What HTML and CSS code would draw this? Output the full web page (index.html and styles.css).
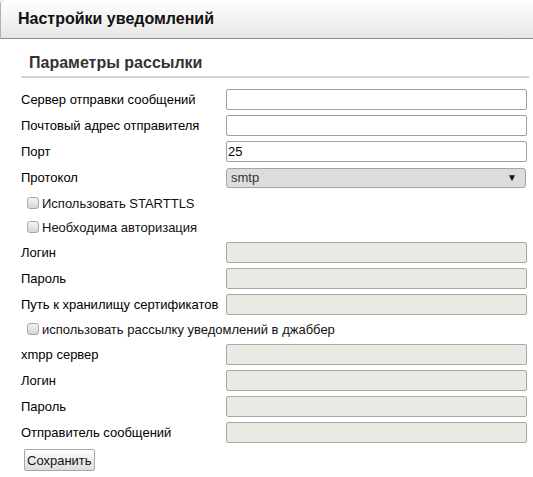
FILE: index.html
```html
<!DOCTYPE html>
<html lang="ru">
<head>
<meta charset="utf-8">
<title>Настройки уведомлений</title>
<link rel="stylesheet" href="styles.css">
</head>
<body>
<div class="header"><h1 class="header-title">Настройки уведомлений</h1></div>
<div class="section">
  <h2 class="section-title">Параметры рассылки</h2>
  <form class="form">
    <div class="row"><label class="lbl">Сервер отправки сообщений</label><input class="field" type="text"></div>
    <div class="row"><label class="lbl">Почтовый адрес отправителя</label><input class="field" type="text"></div>
    <div class="row"><label class="lbl">Порт</label><input class="field" type="text" value="25"></div>
    <div class="row row-select"><label class="lbl">Протокол</label><div class="select"><span>smtp</span><span class="arrow">▼</span></div></div>
    <div class="row row-cb"><label class="cb"><input type="checkbox" class="box">Использовать STARTTLS</label></div>
    <div class="row row-cb"><label class="cb"><input type="checkbox" class="box">Необходима авторизация</label></div>
    <div class="row"><label class="lbl">Логин</label><input class="field" type="text" disabled></div>
    <div class="row"><label class="lbl">Пароль</label><input class="field" type="password" disabled></div>
    <div class="row"><label class="lbl">Путь к хранилищу сертификатов</label><input class="field" type="text" disabled></div>
    <div class="row row-cb"><label class="cb"><input type="checkbox" class="box">использовать рассылку уведомлений в джаббер</label></div>
    <div class="row"><label class="lbl">xmpp сервер</label><input class="field" type="text" disabled></div>
    <div class="row"><label class="lbl">Логин</label><input class="field" type="text" disabled></div>
    <div class="row"><label class="lbl">Пароль</label><input class="field" type="password" disabled></div>
    <div class="row"><label class="lbl">Отправитель сообщений</label><input class="field" type="text" disabled></div>
    <div class="actions"><button type="button" class="btn">Сохранить</button></div>
  </form>
</div>
</body>
</html>
```
FILE: styles.css
```css
html, body {
  margin: 0;
  padding: 0;
  background: #fff;
  font-family: "Liberation Sans", Arial, sans-serif;
  color: #000;
}
.header {
  box-sizing: border-box;
  height: 39px;
  background: linear-gradient(#ffffff, #e6e6e6);
  border-bottom: 1px solid #8c8c8c;
  border-left: 1px solid #b0b0b0;
  border-top-left-radius: 4px;
  display: flex;
  align-items: center;
}
.header-title {
  margin: 0 0 0 17px;
  font-size: 16px;
  font-weight: bold;
  color: #111;
}
.section {
  margin: 0 4px 0 21px;
}
.section-title {
  margin: 0;
  padding: 15px 0 0 8px;
  height: 22px;
  font-size: 16px;
  font-weight: bold;
  color: #333;
  border-bottom: 2px solid #d0d0d0;
}
.form {
  margin: 0;
  padding-top: 8px;
}
.row {
  display: flex;
  align-items: center;
  height: 26px;
  font-size: 13px;
}
.row-select { height: 27px; }
.row-cb { height: 24px; }
.lbl {
  width: 205px;
  flex: none;
}
.field {
  box-sizing: border-box;
  width: 301px;
  height: 21px;
  margin: 0;
  padding: 0 1px;
  border: 1px solid #a0a0a0;
  border-radius: 2px;
  font-family: "Liberation Sans", Arial, sans-serif;
  font-size: 13px;
  color: #000;
  background: #fff;
  outline: none;
}
.field:disabled {
  background: #eae9e3;
  border-color: #a8a8a8;
}
.select {
  box-sizing: border-box;
  width: 300px;
  height: 20px;
  border: 1px solid #a5a5a5;
  border-radius: 3px;
  background: #dddddd;
  display: flex;
  align-items: center;
  justify-content: space-between;
  padding: 0 8px 0 4px;
  color: #333;
  font-size: 13px;
}
.arrow {
  font-size: 10px;
  color: #111;
}
.cb {
  display: flex;
  align-items: center;
  padding-left: 6px;
  color: #111;
}
.box {
  appearance: none;
  -webkit-appearance: none;
  width: 12px;
  height: 12px;
  margin: 0 3px 0 0;
  border: 1px solid #a8a8a8;
  border-radius: 3px;
  background: linear-gradient(#f4f4f4, #d4d4d4);
  box-sizing: border-box;
}
.actions {
  padding-top: 4px;
  padding-left: 3px;
}
.btn {
  box-sizing: border-box;
  height: 22px;
  padding: 0 2px;
  border: 1px solid #a8a8a8;
  border-radius: 2px;
  background: linear-gradient(#ffffff, #dcdcdc);
  font-family: "Liberation Sans", Arial, sans-serif;
  font-size: 13px;
  color: #111;
}
```
